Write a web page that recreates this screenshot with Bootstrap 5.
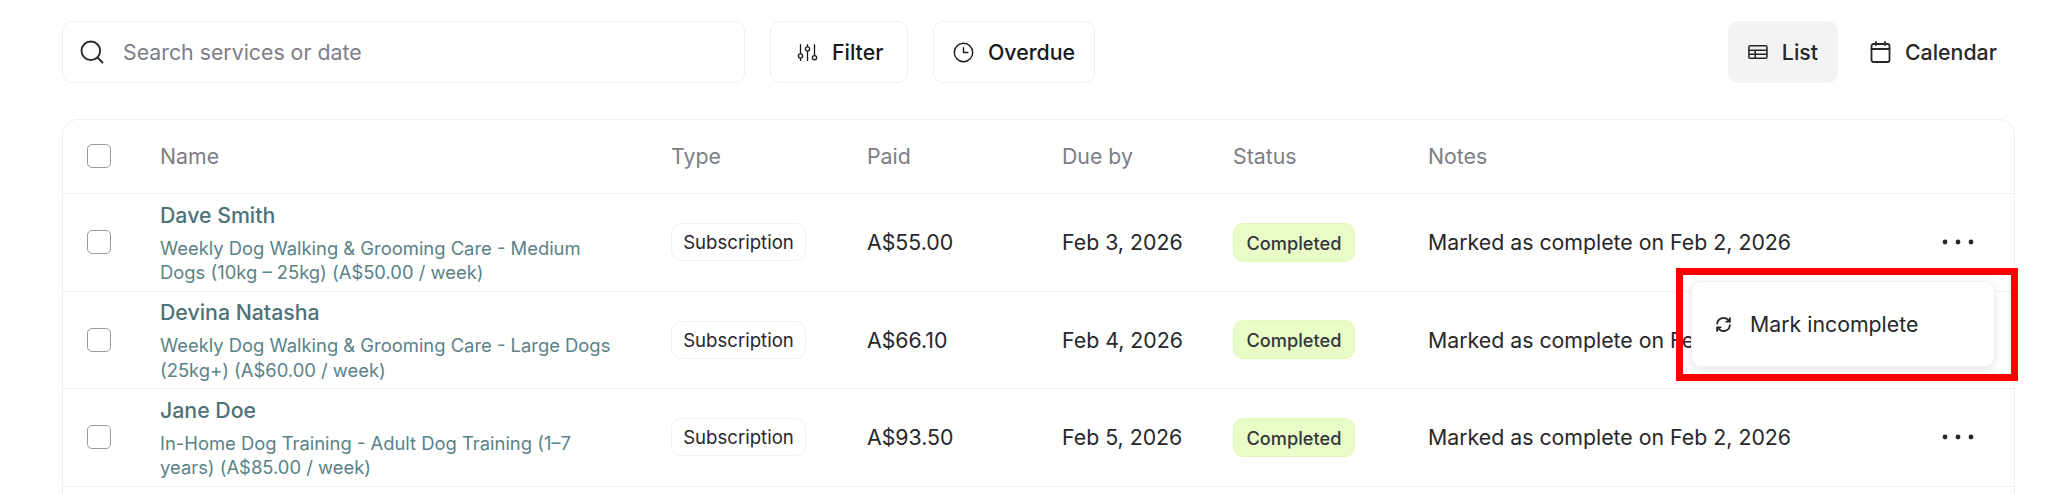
<!DOCTYPE html>
<html lang="en">
<head>
<meta charset="UTF-8" />
<meta name="viewport" content="width=device-width, initial-scale=1.0" />
<title>Bookings</title>
<link href="https://cdn.jsdelivr.net/npm/bootstrap@5.3.0/dist/css/bootstrap.min.css" rel="stylesheet" />
<style>
  html, body { height: 494px; overflow: hidden; }
  body { font-family: Inter, "Liberation Sans", sans-serif; font-size: 21.3px; color: #27272a; background: #fff; }
  .page-wrap { position: relative; padding: 21px 33px 0 62px; }
  .tool-bar { height: 62px; margin-right: -4px; margin-bottom: 36px; gap: 25px; }
  .search-box { width: 683px; height: 62px; border: 1px solid #efefef; border-radius: 10px; padding: 0 17px 0 15px; gap: 17px; color: #7d7d86; }
  .search-box svg { color: #27272a; }
  .tool-bar span, .row-menu span { padding-top: 2px; }
  .tool-btn { height: 62px; border: 1px solid #efefef; border-radius: 10px; gap: 14px; font-weight: 500; color: #18181b; background: #fff; padding: 0 15px; font-size: 21.3px; }
  .btn-filter { width: 138px; padding-left: 26px; }
  .btn-overdue { width: 162px; padding-left: 19px; }
  .view-btn { height: 62px; border-radius: 10px; gap: 14px; padding: 0 20px; font-size: 21.3px; font-weight: 500; color: #27272a; }
  .view-list { width: 110px; background: #f3f3f3; }
  .view-cal { width: 171px; margin-left: 10px; padding-left: 22px; padding-right: 0; }
  .data-card { border: 1px solid #efefef; border-bottom: 0; border-radius: 16px 16px 0 0; }
  .data-table { table-layout: fixed; width: 100%; margin: 0; border-collapse: collapse; }
  .data-table th, .data-table td { padding: 0; border-bottom: 1px solid #efefef; vertical-align: middle; font-size: 21.3px; color: #27272a; background: transparent; box-shadow: none; }
  .data-table th { height: 73.5px; font-weight: 400; color: #7d7d86; }
  .data-table tbody td { height: 97.5px; }
  .data-table tbody td.plain-cell { padding-top: 2px; }
  .data-table tr.fill-row td { height: 8px; border-bottom: 0; }
  .check-box.form-check-input { width: 24px; height: 24px; margin: 0 0 0 24px; display: block; border: 1.5px solid #9b9b9b; border-radius: 5px; }
  .head-check.form-check-input { margin-top: -2px; }
  .data-table tbody td.person-cell { padding-top: 2px; }
  .person-name { font-weight: 500; color: #4d7278; line-height: 26px; margin-bottom: 8px; }
  .person-plan { font-size: 18.4px; line-height: 24.5px; color: #5a8287; padding-right: 44px; }
  .type-pill { display: inline-block; height: 38px; line-height: 37px; width: 135px; text-align: center; border: 1.5px solid #f0f0f0; border-radius: 10px; font-size: 18.6px; font-weight: 400; color: #27272a; }
  .status-pill { display: inline-block; height: 39px; line-height: 38px; width: 122px; text-align: center; background: #e9fcc8; border: 1px solid #e2f8b8; border-radius: 10px; font-size: 18.2px; font-weight: 500; color: #33363a; }
  .more-dots { margin-left: 28px; display: block; }
  .row-menu { position: absolute; left: 1691px; top: 281px; width: 304px; height: 86px; background: #fff; border: 1px solid #f1f1f1; border-radius: 10px; box-shadow: 0 3px 8px rgba(0,0,0,.1); padding-left: 23px; gap: 18px; z-index: 2; }
  .callout-box { position: absolute; left: 1676px; top: 268px; width: 342px; height: 113px; border: 7px solid #fe0000; z-index: 3; }
</style>
</head>
<body>
<div class="page-wrap">
  <div class="tool-bar d-flex align-items-center">
    <div class="search-box d-flex align-items-center">
      <svg width="28" height="28" viewBox="0 0 24 24" fill="none" stroke="currentColor" stroke-width="1.6" stroke-linecap="round"><circle cx="11" cy="11" r="8"/><path d="m21 21-4.3-4.3"/></svg>
      <span>Search services or date</span>
    </div>
    <button type="button" class="btn tool-btn btn-filter d-flex align-items-center">
      <svg width="21" height="21" viewBox="0 0 24 24" fill="none" stroke="currentColor" stroke-width="1.5" stroke-linecap="round"><path d="M4 3v10M4 19v2M12 3v2M12 11v10M20 3v12"/><circle cx="4" cy="16" r="2.4"/><circle cx="12" cy="8" r="2.4"/><circle cx="20" cy="18" r="2.4"/></svg>
      <span>Filter</span>
    </button>
    <button type="button" class="btn tool-btn btn-overdue d-flex align-items-center">
      <svg width="21" height="21" viewBox="0 0 24 24" fill="none" stroke="currentColor" stroke-width="1.6" stroke-linecap="round" stroke-linejoin="round"><circle cx="12" cy="12" r="10.5"/><path d="M12 6.5V12h5"/></svg>
      <span>Overdue</span>
    </button>
    <div class="d-flex align-items-center ms-auto">
      <div class="view-btn view-list d-flex align-items-center">
        <svg width="22" height="20" viewBox="0 0 22 20" fill="none" stroke="currentColor" stroke-width="1.7"><rect x="1" y="3" width="20" height="14" rx="1.5"/><path d="M1 8h20M1 12.5h20M8 8v9"/></svg>
        <span>List</span>
      </div>
      <div class="view-btn view-cal d-flex align-items-center">
        <svg width="21" height="22" viewBox="0 0 21 22" fill="none" stroke="currentColor" stroke-width="1.8" stroke-linecap="round"><rect x="1.5" y="3" width="18" height="18" rx="2"/><path d="M1.5 8h18M6 1v3M15 1v3"/></svg>
        <span>Calendar</span>
      </div>
    </div>
  </div>

  <div class="data-card">
    <table class="table data-table">
      <colgroup>
        <col style="width:97px" /><col style="width:511px" /><col style="width:196px" /><col style="width:195px" /><col style="width:171px" /><col style="width:195px" /><col /><col style="width:100px" />
      </colgroup>
      <thead>
        <tr>
          <th><input class="form-check-input check-box head-check" type="checkbox" /></th>
          <th>Name</th><th>Type</th><th>Paid</th><th>Due by</th><th>Status</th><th>Notes</th><th></th>
        </tr>
      </thead>
      <tbody id="rows"></tbody>
    </table>
  </div>

  <div class="row-menu d-flex align-items-center">
    <svg width="17" height="17" viewBox="0 0 24 24" fill="none" stroke="#27272a" stroke-width="2.6" stroke-linecap="round" stroke-linejoin="round"><path d="M3 11a9 9 0 0 1 15.5-5.5L21 8M21 3v5h-5"/><path d="M21 13a9 9 0 0 1-15.5 5.5L3 16M3 21v-5h5"/></svg>
    <span>Mark incomplete</span>
  </div>
  <div class="callout-box"></div>
</div>

<script>
  // rows of the table
  const bookings = [
    { name: "Dave Smith", plan: "Weekly Dog Walking & Grooming Care - Medium Dogs (10kg – 25kg) (A$50.00 / week)", paid: "A$55.00", due: "Feb 3, 2026" },
    { name: "Devina Natasha", plan: "Weekly Dog Walking & Grooming Care - Large Dogs (25kg+) (A$60.00 / week)", paid: "A$66.10", due: "Feb 4, 2026" },
    { name: "Jane Doe", plan: "In-Home Dog Training - Adult Dog Training (1–7 years) (A$85.00 / week)", paid: "A$93.50", due: "Feb 5, 2026" }
  ];
  const dots = `<svg class="more-dots" width="32" height="6" viewBox="0 0 32 6" fill="#27272a"><circle cx="3" cy="3" r="2.4"/><circle cx="16" cy="3" r="2.4"/><circle cx="29" cy="3" r="2.4"/></svg>`;
  let html = "";
  bookings.forEach((b) => {
    html += `<tr>
      <td><input class="form-check-input check-box" type="checkbox" /></td>
      <td class="person-cell"><div class="person-name">${b.name}</div><div class="person-plan">${b.plan.replace("&", "&amp;")}</div></td>
      <td><span class="type-pill">Subscription</span></td>
      <td class="plain-cell">${b.paid}</td>
      <td class="plain-cell">${b.due}</td>
      <td><span class="status-pill">Completed</span></td>
      <td class="plain-cell">Marked as complete on Feb 2, 2026</td>
      <td>${dots}</td>
    </tr>`;
  });
  html += `<tr class="fill-row"><td colspan="8"></td></tr>`;
  document.getElementById("rows").innerHTML = html;
</script>
<script src="https://cdn.jsdelivr.net/npm/bootstrap@5.3.0/dist/js/bootstrap.bundle.min.js"></script>
</body>
</html>
